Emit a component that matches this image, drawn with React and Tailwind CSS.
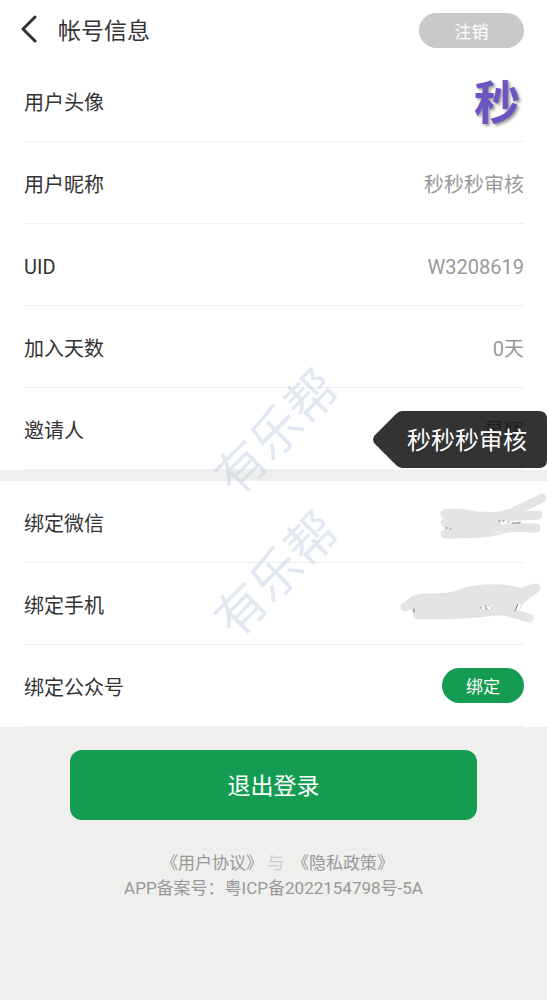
const GREY = 'text-[#999999]';

function Row({ label, children }) {
  return (
    <div className="flex h-[82px] items-center justify-between border-b border-[#f0f0f0] pt-1 text-xl leading-7">
      <dt className="text-[#333333]">{label}</dt>
      <dd className={`relative ${GREY}`}>{children}</dd>
    </div>
  );
}

function Watermark({ className }) {
  return (
    <div
      aria-hidden="true"
      className={`pointer-events-none absolute left-1/2 -translate-x-1/2 -rotate-45 whitespace-nowrap text-[50px] leading-none text-[#bccbdf]/45 ${className}`}
    >
      有乐帮
    </div>
  );
}

function WechatScribble() {
  return (
    <svg width="110" height="46" viewBox="0 0 110 46" className="absolute -right-[23px] -top-7 overflow-visible" fill="none" strokeLinecap="round" strokeLinejoin="round" aria-hidden="true">
      <g stroke="#e4e4e4" strokeWidth="9">
        <path d="M8 18C18 16 28 18 40 20C56 21 66 21 78 15C88 11 96 6 105 2" />
        <path d="M8 18C40 21 70 22 101 19" />
        <path d="M8 27H56" />
        <path d="M8 38C24 37 50 39 66 33C76 30 88 32 99 32" />
        <path d="M12 20L60 22V31L12 36Z" fill="#e4e4e4" />
      </g>
      <path d="M72 26.500H83" stroke="#ffffff" strokeWidth="2" />
      <path d="M56 37l2-1M61 36h2" stroke="#ffffff" strokeWidth="1" />
      <path d="M9 32h1m3 1h1M62 25h1m3 0h1M71 26h1m3 1h8v-1" stroke="#777777" strokeWidth="1" />
    </svg>
  );
}

function PhoneScribble() {
  return (
    <svg width="150" height="50" viewBox="0 0 150 50" className="absolute -right-[23px] -top-6 overflow-visible" fill="none" strokeLinecap="round" strokeLinejoin="round" aria-hidden="true">
      <g stroke="#e4e4e4" strokeWidth="9">
        <path d="M8 25L18 18" />
        <path d="M16 19C24 14 40 17 52 15C64 13 66 9 80 8C94 6 108 7 118 9C128 13 130 6 139 6L132 11L122 19L117 31C104 27 94 30 78 31C62 33 40 33 21 33Z" fill="#e4e4e4" />
        <path d="M114 31L132 36" />
      </g>
      <path d="M83 26h3l3-2 3 1 3-1 3 2v1H83Z" fill="#ffffff" />
      <path d="M118 28l3-7 3 1-2 7Z" fill="#ffffff" />
      <path d="M83 26h1m5-2v3h1m5-1h1M118 29l3-7M17 27v3" stroke="#777777" strokeWidth="1" />
    </svg>
  );
}

export default function App() {
  return (
    <div className="relative min-h-screen overflow-hidden bg-[#efefed] font-['Roboto','Noto_Sans_CJK_SC',sans-serif]">
      <header className="flex h-[60px] items-center bg-white pl-5 pr-[23px]">
        <button type="button" aria-label="返回" className="text-[#333333]">
          <svg width="18" height="30" viewBox="0 0 18 30" fill="none" stroke="currentColor" strokeWidth="3" strokeLinecap="round" strokeLinejoin="round">
            <path d="M15 2L3 14L15 26" />
          </svg>
        </button>
        <h1 className="ml-5 pt-1 text-[23px] leading-8 text-[#333333]">帐号信息</h1>
        <button type="button" className="ml-auto h-[35px] w-[105px] rounded-full bg-[#c9c9c9] pt-1 text-[17px] leading-none text-white">注销</button>
      </header>

      <main>
        <dl className="bg-white pl-6 pr-[23px]">
          <Row label="用户头像">
            <span className="block pr-1 text-[46px] leading-none font-bold text-[#6a55c2] [text-shadow:2px_2px_3px_#00000066]">秒</span>
          </Row>
          <Row label="用户昵称">秒秒秒审核</Row>
          <Row label="UID">W3208619</Row>
          <Row label="加入天数">0天</Row>
          <Row label="邀请人">
            星辉
            <div role="tooltip" className="absolute -right-[23px] -top-[6px] h-[57px] w-[174px]">
              <svg viewBox="0 0 174 57" className="absolute inset-0 size-full" fill="#000000" fillOpacity="0.8" aria-hidden="true">
                <path d="M29 0H166Q174 0 174 8V49Q174 57 166 57H29Q26 57 23 54L2 33Q-2 28.500 2 24L23 3Q26 0 29 0Z" />
              </svg>
              <span className="relative flex h-full items-center pl-[34px] pt-1 text-2xl whitespace-nowrap text-white">秒秒秒审核</span>
            </div>
          </Row>
        </dl>
        <dl className="mt-[11px] bg-white pl-6 pr-[23px]">
          <Row label="绑定微信"><WechatScribble /></Row>
          <Row label="绑定手机"><PhoneScribble /></Row>
          <Row label="绑定公众号">
            <button type="button" className="mb-1 block h-[35px] w-[82px] rounded-full bg-[#149c52] pt-1 text-[17px] leading-none text-white">绑定</button>
          </Row>
        </dl>
        <div className="px-[70px] pt-[23px]">
          <button type="button" className="h-[70px] w-full rounded-xl bg-[#149c52] pt-1 text-[23px] text-white">退出登录</button>
        </div>
      </main>

      <footer className={`mt-[31px] text-center text-[17px] leading-[25px] ${GREY}`}>
        <p className="pl-2">
          <a href="#terms">《用户协议》</a>
          <span className="mx-1 text-[#cccccc]">与</span>{' '}
          <a href="#privacy">《隐私政策》</a>
        </p>
        <p>APP备案号：粤ICP备2022154798号-5A</p>
      </footer>

      <Watermark className="top-[408px] ml-[3px]" />
      <Watermark className="top-[550px] ml-[3px]" />
    </div>
  );
}
